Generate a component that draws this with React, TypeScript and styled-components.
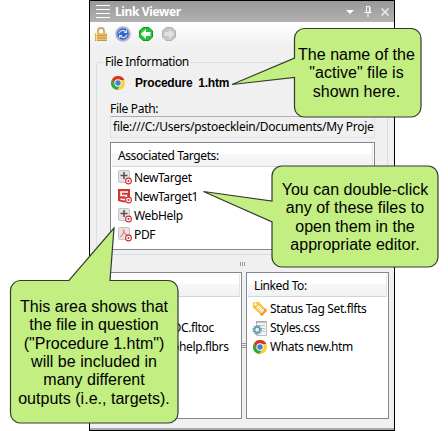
import React from "react";
import styled, { createGlobalStyle } from "styled-components";

const Global = createGlobalStyle`
  * { box-sizing: border-box; }
  body { margin: 0; background: #fff; font-family: "Noto Sans", "Open Sans", sans-serif; font-size: 12px; color: #000; }
  svg { display: block; flex: none; }
`;
const Stage = styled.main`
  position: relative; width: 448px; height: 431px; overflow: hidden; padding-left: 89px;
`;
const Window = styled.section`
  width: 306px; height: 431px; border: 1px solid #000; background: #f0f0f0;
  display: flex; flex-direction: column;
`;
const TitleBar = styled.header`
  height: 21px; flex: none; display: flex; align-items: center; padding: 0 5px 0 6px;
  background: linear-gradient(#999, #b1b1b1); color: #fff;
`;
const Title = styled.h1`
  margin: 1px auto 0 5px; font-size: 12px; line-height: 20px; font-weight: 700; letter-spacing: -0.36px; white-space: nowrap;
`;
const TitleButtons = styled.div` display: flex; align-items: center; gap: 8px; `;
const Toolbar = styled.nav`
  height: 25px; flex: none; display: flex; align-items: center; gap: 7px; padding: 0 0 1px 4px;
  background: linear-gradient(#fff, #f0f0f0);
`;
const Group = styled.section`
  margin: 15px 6px 0 6px; height: 193px; flex: none; padding: 0 13px;
  border: 1px solid #d5dfe5; border-radius: 3px;
`;
const Legend = styled.h2`
  margin: -9px 0 0 -7px; width: max-content; height: 16px; padding: 0 2px; background: #f0f0f0;
  font-size: 12px; font-weight: 400; line-height: 16px; letter-spacing: -0.4px; white-space: nowrap;
`;
const FileRow = styled.div`
  display: flex; align-items: center; gap: 9px; height: 18px; margin-top: 4px;
  font: bold 12px "Liberation Sans", Arial, sans-serif; white-space: nowrap;
  letter-spacing: -0.2px; word-spacing: 2.5px;
`;
const Label = styled.div` margin-top: 9px; height: 15px; line-height: 15px; letter-spacing: -0.3px; `;
const PathField = styled.div`
  width: 265px; height: 22px; border: 1px solid #dde2e8; border-top-color: #abadb3;
  padding: 0 2px;
`;
const PathText = styled.div` white-space: nowrap; line-height: 20px; letter-spacing: -0.25px; `;
const List = styled.section<{ $w: number; $h: number }>`
  width: ${p => p.$w}px; height: ${p => p.$h}px; border: 1px solid #828790; background: #fff;
  padding: 1px; flex: none; overflow: hidden;
`;
const TargetsSlot = styled.div` margin-top: 4px; `;
const ListHeader = styled.div`
  height: 23px; padding-left: 6px; line-height: 24px; white-space: nowrap; letter-spacing: -0.4px;
  background: linear-gradient(#fff 0 45%, #f7f8fa 46%, #f1f2f4);
  border-bottom: 1px solid #d5d5d5; border-right: 1px solid #e0e3e7;
`;
const Rows = styled.ul<{ $indent?: number; $top?: number }>`
  margin: 0; padding: ${p => p.$top ?? 2}px 0 0 ${p => p.$indent ?? 6}px; list-style: none;
`;
const Row = styled.li`
  height: 19px; display: flex; align-items: center; gap: 2px; line-height: 19px; white-space: nowrap;
  letter-spacing: -0.36px;
`;
const Splitter = styled.div`
  height: 17px; flex: none; display: flex; justify-content: center; align-items: center;
`;
const Panes = styled.div` display: flex; padding-left: 6px; `;
const PaneGrip = styled.div` width: 4px; display: flex; align-items: center; `;
const StatusEdge = styled.footer` margin-top: auto; height: 2px; background: #aaa; `;

const Overlay = styled.svg` position: absolute; inset: 0; `;
const Note = styled.aside<{ $x: number; $y: number; $w: number; $h: number }>`
  position: absolute; left: ${p => p.$x}px; top: ${p => p.$y}px; width: ${p => p.$w}px; height: ${p => p.$h}px;
  display: flex; flex-direction: column; align-items: center; justify-content: center;
  font: 16px/18.3px "Liberation Sans", Arial, sans-serif; letter-spacing: 0.02px; white-space: nowrap;
`;

const Chrome = () => (
  <svg width="16" height="16" viewBox="0 0 16 16">
    <circle cx="8" cy="8" r="7" fill="#f9d030" />
    <path d="M2 4.4A7 7 0 0 1 14.4 5H8L5 9.5Z" fill="#d93428" />
    <path d="M2 4.4A7 7 0 0 0 7.4 15L10 10 5.2 9.5Z" fill="#36a542" />
    <circle cx="8" cy="8" r="3.7" fill="#f4f7fb" />
    <circle cx="8" cy="8" r="2.7" fill="#3f82cf" />
  </svg>
);
const TargetMark = () => (
  <g>
    <circle cx="10.500" cy="11" r="2.9" fill="#fff" stroke="#cf3037" strokeWidth="1.1" />
    <circle cx="10.500" cy="11" r="1.1" fill="#cf3037" />
  </g>
);
const Tile = () => <rect x=".5" y=".5" width="11" height="12" rx="1.5" fill="#e4e4e6" stroke="#c2c2c5" />;
const PlusTarget = () => (
  <svg width="14" height="15" viewBox="0 0 14 15"><Tile /><path d="M6 2V9M2.5 5.5H9.5" stroke="#555" strokeWidth="1.6" /><TargetMark /></svg>
);
const Html5Target = () => (
  <svg width="14" height="15" viewBox="0 0 14 15">
    <path d="M0 0H12V12L6 13.5 0 12Z" fill="#d5362f" />
    <path d="M10 3H3V6.500H8.500V10L6 10.700 2.500 10" fill="none" stroke="#fff" strokeWidth="1.5" /><TargetMark />
  </svg>
);
const PdfTarget = () => (
  <svg width="14" height="15" viewBox="0 0 14 15"><Tile /><path d="M2 10C5 8 6 5 5.5 2.5C6 6 8 8.5 11 8.2" fill="none" stroke="#f08080" strokeWidth="1.3" /><TargetMark /></svg>
);
const Lock = () => (
  <svg width="14" height="16" viewBox="0 0 14 16">
    <path d="M4 8V4.5Q4 2 7 2T10 4.500V8" fill="none" stroke="#c4aa74" strokeWidth="1.8" />
    <path d="M1 7H13V15H1Z" fill="#e9c067" /><path d="M1 9.5H13M1 12H13M1 14.5H13" stroke="#c59543" /><path d="M2.5 7V15" stroke="#f7df9c" />
  </svg>
);
const Refresh = () => (
  <svg width="16" height="16" viewBox="0 0 16 16">
    <circle cx="8" cy="8" r="6.8" fill="#3a63cb" stroke="#aeb4bf" strokeWidth="2" />
    <path d="M4 7.5C4.6 4.400 8 3.600 10.3 5.400M12 8.500C11.4 11.600 8 12.400 5.7 10.600" fill="none" stroke="#c8dcff" strokeWidth="1.3" />
    <path d="M8.700 7H12V3.700ZM7.300 9H4V12.300Z" fill="#dce8ff" />
  </svg>
);
const Arrow = ({ forward = false }: { forward?: boolean }) => (
  <svg width="16" height="16" viewBox="0 0 16 16">
    <path d="M5 1.5H11L14.5 5V11L11 14.5H5L1.5 11V5Z" fill={forward ? "#c6c6c6" : "#20c332"} stroke={forward ? "#b2b2b2" : "#129624"} />
    <path transform={forward ? "translate(16) scale(-1 1)" : undefined} d="M2.800 8L8 3V6H12.500V10H8V13Z" fill={forward ? "#e2e2e2" : "#fff"} />
  </svg>
);
const Tag = () => (
  <svg width="16" height="16" viewBox="0 0 16 16">
    <path d="M1 1.5L6.5 .8L15.2 9.5L10 15L1 6.5Z" fill="#ffc22e" /><path d="M15.2 9.5L10 15L7.8 13L13 7.3Z" fill="#fa9531" />
    <path d="M6.8 4L12.2 9.4 9.6 12 4.2 6.7Z" fill="#fff" /><path d="M6.5 5.5L10.8 9.8M5.4 6.8L9.6 11" stroke="#aaa" strokeWidth=".7" /><circle cx="3.4" cy="3.2" r="1.2" fill="#fff" />
  </svg>
);
const Sheet = () => (
  <svg width="16" height="16" viewBox="0 0 16 16">
    <path d="M4.5 1.5H14.5V15.5H4.5Z" fill="#f1f3f4" stroke="#b9bdc0" /><path d="M5 1V3M7 1V3M9 1V3M11 1V3M13 1V3" stroke="#888" strokeWidth=".8" /><path d="M6 5.5H13M9 8.5H13M10 11.5H13" stroke="#c0c5c9" />
    <circle cx="5.2" cy="9.8" r="4" fill="none" stroke="#6aa0b2" strokeWidth="1.7" strokeDasharray="1.5 1" /><circle cx="5.2" cy="9.8" r="2.7" fill="#e4f2f5" stroke="#5d98ac" strokeWidth="1.5" />
  </svg>
);

export default function App() {
  return (
    <Stage>
      <Global />
      <Window>
        <TitleBar>
          <svg width="14" height="14" viewBox="0 0 14 14"><path d="M0 .5H14M0 4.5H14M0 8.5H14M0 12.5H14" stroke="#fff" /></svg>
          <Title>Link Viewer</Title>
          <TitleButtons>
            <svg width="10" height="10" viewBox="0 0 10 10"><path d="M1 3H9L5 7Z" fill="#fff" /></svg>
            <svg width="10" height="11" viewBox="0 0 10 11"><path d="M3.5 6.5V.5H6.5V6.5M7 1V6M1.5 6.5H8.5M5 7V11" fill="none" stroke="#fff" /></svg>
            <svg width="8" height="8" viewBox="0 0 8 8"><path d="M.5 .5L7.5 7.5M7.5 .5L.5 7.5" stroke="#eee" strokeWidth="1.5" /></svg>
          </TitleButtons>
        </TitleBar>
        <Toolbar><Lock /><Refresh /><Arrow /><Arrow forward /></Toolbar>
        <Group>
          <Legend>File Information</Legend>
          <FileRow><Chrome />Procedure 1.htm</FileRow>
          <Label>File Path:</Label>
          <PathField><PathText>file:///C:/Users/pstoecklein/Documents/My Proje</PathText></PathField>
          <TargetsSlot>
            <List $w={265} $h={108}>
              <ListHeader>Associated Targets:</ListHeader>
              <Rows $top={1}>
                <Row><PlusTarget />NewTarget</Row>
                <Row><Html5Target />NewTarget1</Row>
                <Row><PlusTarget />WebHelp</Row>
                <Row><PdfTarget />PDF</Row>
              </Rows>
            </List>
          </TargetsSlot>
        </Group>
        <Splitter><svg width="5" height="4" viewBox="0 0 5 4"><path d="M.5 0V4M2.5 0V4M4.5 0V4" stroke="#999" /></svg></Splitter>
        <Panes>
          <List $w={146} $h={147}>
            <ListHeader />
            <Rows $indent={74}>
              <Row />
              <Row>OC.fltoc</Row>
              <Row>bhelp.flbrs</Row>
            </Rows>
          </List>
          <PaneGrip><svg width="4" height="5" viewBox="0 0 4 5"><path d="M0 .5H4M0 2.5H4M0 4.5H4" stroke="#999" /></svg></PaneGrip>
          <List $w={143} $h={147}>
            <ListHeader>Linked To:</ListHeader>
            <Rows $indent={4}>
              <Row><Tag />Status Tag Set.flfts</Row>
              <Row><Sheet />Styles.css</Row>
              <Row><Chrome />Whats new.htm</Row>
            </Rows>
          </List>
        </Panes>
        <StatusEdge />
      </Window>
      <Overlay width="448" height="431" viewBox="0 0 448 431" fill="#c2ee82" stroke="#343b2c" strokeWidth="1.2">
        <path d="M304 28.5H411A10 10 0 0 1 421 38.5V107A10 10 0 0 1 411 117H304A10 10 0 0 1 294.500 107V77.500L232 84.500L294.500 58V38.500A10 10 0 0 1 304 28.500Z" />
        <path d="M282 166H428A10 10 0 0 1 438 176V257A10 10 0 0 1 428 267H282A10 10 0 0 1 272 257V222L203.500 191.500L272 201V176A10 10 0 0 1 282 166Z" />
        <path d="M20 280.500H69L114 228L110 280.500H168A10 10 0 0 1 178 290.500V413A10 10 0 0 1 168 423H20A10 10 0 0 1 10.500 413V290.500A10 10 0 0 1 20 280.500Z" />
      </Overlay>
      <Note $x={293} $y={29} $w={127} $h={89}><span>The name of the</span><span>"active" file is</span><span>shown here.</span></Note>
      <Note $x={272} $y={167} $w={166} $h={101}><span>You can double-click</span><span>any of these files to</span><span>open them in the</span><span>appropriate editor.</span></Note>
      <Note $x={10} $y={281} $w={168} $h={144}><span>This area shows that</span><span>the file in question</span><span>("Procedure 1.htm")</span><span>will be included in</span><span>many different</span><span>outputs (i.e., targets).</span></Note>
    </Stage>
  );
}
